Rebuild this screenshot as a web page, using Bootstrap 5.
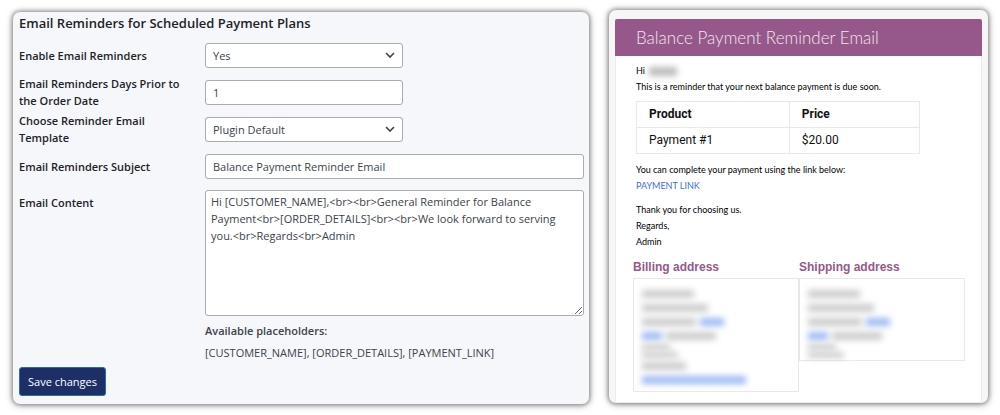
<!DOCTYPE html>
<html lang="en">
<head>
<meta charset="utf-8">
<meta name="viewport" content="width=device-width, initial-scale=1">
<title>Email Reminders</title>
<link href="https://cdn.jsdelivr.net/npm/bootstrap@5.3.0/dist/css/bootstrap.min.css" rel="stylesheet">
<style>
body{font-family:"Open Sans","Noto Sans",sans-serif;font-size:11px;line-height:17px;color:#3c434a;background:#fff}
.page{display:grid;grid-template-columns:576fr 379fr;gap:20px;padding:10px 12px 10px 13px;align-items:start}
.panel{border-radius:7px;box-shadow:0 0 4px 1px rgba(0,0,0,.38),0 1px 8px rgba(0,0,0,.28)}
.settings{background:#f6f7fb;margin-top:2px;padding:1px 5px 7px 6px;min-height:392px}
.settings h1{font-size:13px;line-height:21px;font-weight:600;color:#1d2327;margin:0 0 4px}
.field-row{display:grid;grid-template-columns:166px 1fr;column-gap:20px;align-items:center;min-height:34px;margin-bottom:3px}
.field-row label{font-weight:600;color:#1d2327}
.settings .form-control,.settings .form-select{font-size:11px;line-height:17px;color:#3c434a;border:1px solid #a9abaf;border-radius:3px;padding:3px 7px;background-color:#fff;min-height:0}
.settings .form-select{background-image:url("data:image/svg+xml,%3Csvg xmlns='http://www.w3.org/2000/svg' viewBox='0 0 12 12'%3E%3Cpath d='M2 4l4 4 4-4' fill='none' stroke='%23444' stroke-width='1.6'/%3E%3C/svg%3E");background-size:12px;background-position:right 6px center}
.short{width:198px}
.settings textarea.form-control{height:126px;padding:2px 5px;resize:vertical}
.content-row{align-items:start;margin-top:7px}
.content-row label{padding-top:4px}
.hint-title{margin:6px 0 5px}
.btn-save{font-size:11px;line-height:17px;margin-top:3px;padding:5px 8px;color:#fff;background:#1d2f66;border:1px solid #2a6cab;border-radius:3px}
.btn-save:hover{background:#16244f;color:#fff}
.mail{background:#f6f6f6;padding:9px 6px 0;min-height:393px;overflow:hidden}
.mail-sheet{background:#fff;border:1px solid #ececec;border-top:0;min-height:384px;font:9px/16px Lato,sans-serif;color:#000}
.mail-head{background:#96588a;color:#f1e6ef;font-family:Lato,sans-serif;font-size:17px;line-height:37px;font-weight:300;margin:0 -1px;padding-left:21px;border-radius:2px 2px 0 0}
.mail-text{padding:7px 61px 0 20px}
.mail-text p{margin:0}
.mail-text a{color:#3a6fdb;text-decoration:none}
.plan-table{width:100%;margin:6px 0 8px;font-family:Roboto,sans-serif;font-size:12px;line-height:17px;color:#111}
.plan-table th,.plan-table td{border:1px solid #e8e8e8;padding:4px 12px}
.plan-table th{width:54%}
.plan-table th+th{width:46%}
.addresses{display:grid;grid-template-columns:1fr 1fr;padding:9px 16px 0 17px;align-items:start}
.addresses h2{font:bold 12px/16px "Liberation Sans",sans-serif;color:#96588a;margin:0 0 3px}
.address-box{border:1px solid #e8e8e8;padding:8px 8px 1px}
.address-box.billing{padding-bottom:4px}
.bar-line{display:flex;gap:4px;height:14px;align-items:center;filter:blur(3px)}
.bar-line.cut{height:8px}
.bar-line span{height:8px;background:#ccc}
.bar-line.cut span{height:6px}
.bar-line .blue{background:#9db9f3}
.name-blur{display:inline-block;width:28px;height:9px;background:#bbb;filter:blur(3px);margin-left:2px;vertical-align:middle}
</style>
</head>
<body>
<main class="page">
<form class="panel settings">
  <h1>Email Reminders for Scheduled Payment Plans</h1>
  <div class="field-row"><label for="enable">Enable Email Reminders</label>
    <select id="enable" class="form-select short"><option>Yes</option><option>No</option></select></div>
  <div class="field-row"><label for="days">Email Reminders Days Prior to the Order Date</label>
    <input id="days" class="form-control short" type="text" value="1"></div>
  <div class="field-row"><label for="template">Choose Reminder Email Template</label>
    <select id="template" class="form-select short"><option>Plugin Default</option></select></div>
  <div class="field-row"><label for="subject">Email Reminders Subject</label>
    <input id="subject" class="form-control" type="text" value="Balance Payment Reminder Email"></div>
  <div class="field-row content-row"><label for="content">Email Content</label>
    <div>
      <textarea id="content" class="form-control">Hi [CUSTOMER_NAME],&lt;br&gt;&lt;br&gt;General Reminder for Balance Payment&lt;br&gt;[ORDER_DETAILS]&lt;br&gt;&lt;br&gt;We look forward to serving you.&lt;br&gt;Regards&lt;br&gt;Admin</textarea>
      <div class="fw-semibold hint-title">Available placeholders:</div>
      <div>[CUSTOMER_NAME], [ORDER_DETAILS], [PAYMENT_LINK]</div>
    </div></div>
  <button type="button" class="btn btn-save">Save changes</button>
</form>
<section class="panel mail">
  <div class="mail-sheet">
    <div class="mail-head">Balance Payment Reminder Email</div>
    <div class="mail-text">
      <p>Hi <span class="name-blur"></span></p>
      <p>This is a reminder that your next balance payment is due soon.</p>
      <table class="plan-table">
        <thead><tr><th>Product</th><th>Price</th></tr></thead>
        <tbody><tr><td>Payment #1</td><td>$20.00</td></tr></tbody>
      </table>
      <p>You can complete your payment using the link below:</p>
      <p class="mb-2"><a href="#">PAYMENT LINK</a></p>
      <p>Thank you for choosing us.</p>
      <p>Regards,</p>
      <p>Admin</p>
    </div>
    <div class="addresses">
      <div><h2>Billing address</h2>
        <div class="address-box billing">
          <div class="bar-line"><span style="width:52px"></span></div>
          <div class="bar-line"><span style="width:66px"></span></div>
          <div class="bar-line"><span style="width:54px"></span><span class="blue" style="width:24px"></span></div>
          <div class="bar-line"><span class="blue" style="width:20px"></span><span style="width:50px"></span></div>
          <div class="bar-line cut"><span style="width:28px"></span></div>
          <div class="bar-line cut"><span style="width:36px"></span></div>
          <div class="bar-line"><span style="width:44px"></span></div>
          <div class="bar-line"><span class="blue" style="width:104px"></span></div>
        </div></div>
      <div><h2>Shipping address</h2>
        <div class="address-box">
          <div class="bar-line"><span style="width:52px"></span></div>
          <div class="bar-line"><span style="width:66px"></span></div>
          <div class="bar-line"><span style="width:54px"></span><span class="blue" style="width:24px"></span></div>
          <div class="bar-line"><span class="blue" style="width:20px"></span><span style="width:50px"></span></div>
          <div class="bar-line cut"><span style="width:28px"></span></div>
          <div class="bar-line cut"><span style="width:36px"></span></div>
        </div></div>
    </div>
  </div>
</section>
</main>
<script src="https://cdn.jsdelivr.net/npm/bootstrap@5.3.0/dist/js/bootstrap.bundle.min.js"></script>
</body>
</html>
